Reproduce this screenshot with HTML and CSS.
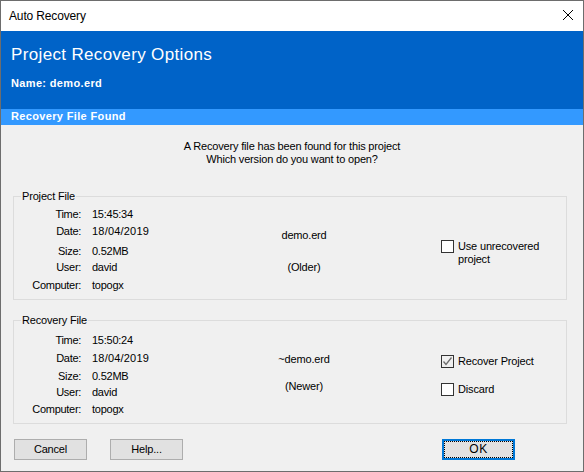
FILE: index.html
```html
<!DOCTYPE html>
<html lang="en">
<head>
<meta charset="utf-8">
<title>Auto Recovery</title>
<link rel="stylesheet" href="styles.css">
</head>
<body>
<div class="window">
  <div class="titlebar">
    <span>Auto Recovery</span>
    <svg class="close" width="10" height="10" viewBox="0 0 10 10"><path d="M0 0L10 10M10 0L0 10" stroke="#000" stroke-width="1" fill="none"/></svg>
  </div>
  <div class="banner">
    <div class="banner-title">Project Recovery Options</div>
    <div class="banner-name">Name: demo.erd</div>
  </div>
  <div class="subbar">Recovery File Found</div>
  <div class="intro">A Recovery file has been found for this project<br>Which version do you want to open?</div>
  <div class="groups">
    <section class="group group-project">
      <div class="legend">Project File</div>
      <div class="fields">
        <div class="k">Time:</div><div class="v">15:45:34</div>
        <div class="k">Date:</div><div class="v date">18/04/2019</div>
        <div class="k">Size:</div><div class="v">0.52MB</div>
        <div class="k">User:</div><div class="v">david</div>
        <div class="k">Computer:</div><div class="v">topogx</div>
      </div>
      <div class="file"><div>demo.erd</div><div>(Older)</div></div>
      <div class="opts">
        <label class="check"><span class="box"></span><span>Use unrecovered<br>project</span></label>
      </div>
    </section>
    <section class="group group-recovery">
      <div class="legend">Recovery File</div>
      <div class="fields">
        <div class="k">Time:</div><div class="v">15:50:24</div>
        <div class="k">Date:</div><div class="v date">18/04/2019</div>
        <div class="k">Size:</div><div class="v">0.52MB</div>
        <div class="k">User:</div><div class="v">david</div>
        <div class="k">Computer:</div><div class="v">topogx</div>
      </div>
      <div class="file"><div>~demo.erd</div><div>(Newer)</div></div>
      <div class="opts">
        <label class="check"><span class="box checked"><svg width="11" height="11" viewBox="0 0 11 11"><path d="M1.5 5.5L4 8.5L9.5 1.5" stroke="#6d6d6d" stroke-width="1.3" fill="none"/></svg></span><span>Recover Project</span></label>
        <label class="check"><span class="box"></span><span>Discard</span></label>
      </div>
    </section>
  </div>
  <div class="actions">
    <button class="btn">Cancel</button>
    <button class="btn">Help...</button>
    <button class="btn default"><span>OK</span></button>
  </div>
</div>
</body>
</html>
```
FILE: styles.css
```css
html, body { margin: 0; padding: 0; }
body { width: 584px; height: 472px; overflow: hidden; }
.window {
  box-sizing: border-box; width: 584px; height: 472px;
  border: 1px solid #6d6d6d; background: #f0f0f0; color: #000;
  font: 11px/15px "Liberation Sans", Arial, sans-serif;
  letter-spacing: -.17px;
}
.titlebar {
  height: 30px; background: #fff; display: flex; align-items: center;
  justify-content: space-between; padding: 0 10px 0 8px;
  font-size: 12px; letter-spacing: -.15px;
}
.close { display: block; margin-bottom: 2px; }
.banner { height: 78px; background: #0063c8; color: #fff; box-sizing: border-box; padding: 14px 10px 0; }
.banner-title { font-size: 17px; line-height: 20px; letter-spacing: .35px; }
.banner-name { font-weight: bold; margin-top: 11px; letter-spacing: .35px; }
.subbar { height: 16px; line-height: 15px; background: #3399ff; color: #fff; font-weight: bold; padding-left: 10px; letter-spacing: .35px; }
.intro { box-sizing: border-box; height: 71px; padding-top: 15px; text-align: center; line-height: 13px; }
.groups { display: flex; flex-direction: column; gap: 20px; padding: 0 16px 0 12px; }
.group {
  position: relative; display: grid; grid-template-columns: 250px 80px 1fr;
  border: 1px solid #dcdcdc;
  box-sizing: border-box; height: 104px;
}
.legend { position: absolute; left: 7px; top: -8px; background: #f0f0f0; padding: 0 1px; }
.fields { display: grid; grid-template-columns: 67px auto; column-gap: 11px; justify-content: start; }
.group-project .fields { padding-top: 10px; grid-template-rows: 17px 20px 16px 18px 17px; }
.group-recovery .fields { padding-top: 12px; grid-template-rows: 18px 18px 16px 17px 17px; }
.k { text-align: right; letter-spacing: -.3px; }
.v { letter-spacing: -.25px; }
.v.date { letter-spacing: .2px; }
.file { display: flex; flex-direction: column; align-items: center; padding-top: 31px; }
.group-project .file { gap: 17px; }
.group-recovery .file { gap: 12px; }
.opts { justify-self: end; width: 125px; display: flex; flex-direction: column; }
.group-project .opts { padding-top: 43px; }
.group-recovery .opts { padding-top: 34px; gap: 15px; }
.check { display: flex; gap: 4px; align-items: flex-start; line-height: 13px; }
.box {
  box-sizing: border-box; width: 13px; height: 13px; flex: none;
  border: 1px solid #333; background: #fff; display: flex; align-items: center; justify-content: center;
}
.box.checked { background: #f0f0f0; }
.actions { display: flex; padding: 15px 0 0 13px; }
.btn {
  box-sizing: border-box; width: 73px; height: 21px; padding: 0;
  background: #e1e1e1; border: 1px solid #adadad; color: #000;
  font: 11px/15px "Liberation Sans", Arial, sans-serif; letter-spacing: -.17px;
}
.btn + .btn { margin-left: 23px; }
.btn.default { margin-left: 259px; border: 2px solid #0078d7; letter-spacing: .6px; font-size: 12px; }
.btn.default span { box-sizing: border-box; display: flex; align-items: center; justify-content: center; height: 100%; border: 1px dotted #000; }
```
